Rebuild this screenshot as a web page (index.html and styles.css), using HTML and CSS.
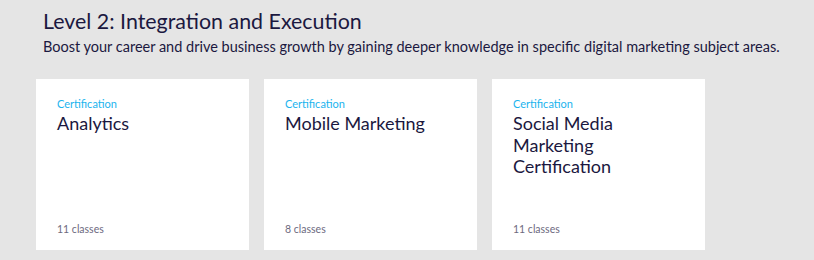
FILE: index.html
```html
<!DOCTYPE html>
<html>
<head>
<meta charset="utf-8">
<link rel="stylesheet" href="styles.css">
</head>
<body>
<section class="level">
  <h2 class="level-title">Level 2: Integration and Execution</h2>
  <p class="level-desc">Boost your career and drive business growth by gaining deeper knowledge in specific digital marketing subject areas.</p>
  <div class="cards">
    <div class="card">
      <div class="card-top">
        <div class="card-kind">Certification</div>
        <div class="card-name">Analytics</div>
      </div>
      <div class="card-count">11 classes</div>
    </div>
    <div class="card">
      <div class="card-top">
        <div class="card-kind">Certification</div>
        <div class="card-name">Mobile Marketing</div>
      </div>
      <div class="card-count">8 classes</div>
    </div>
    <div class="card">
      <div class="card-top">
        <div class="card-kind">Certification</div>
        <div class="card-name">Social Media Marketing Certification</div>
      </div>
      <div class="card-count">11 classes</div>
    </div>
  </div>
</section>
</body>
</html>
```

FILE: styles.css
```css
html, body {
  margin: 0;
  padding: 0;
  background: #e5e5e5;
}
body {
  font-family: "Lato", "Open Sans", sans-serif;
  color: #1b1840;
}
.level {
  padding: 8px 0 0 36px;
}
.level-title {
  margin: 0 0 0 7px;
  font-size: 21.4px;
  font-weight: 400;
  line-height: 27px;
}
.level-desc {
  margin: 3px 0 0 7px;
  font-size: 14.5px;
  line-height: 18px;
}
.cards {
  display: flex;
  gap: 15px;
  margin-top: 23px;
}
.card {
  width: 213px;
  height: 171px;
  background: #fff;
  box-sizing: border-box;
  padding: 18px 21px 14px;
  display: flex;
  flex-direction: column;
  justify-content: space-between;
}
.card-kind {
  font-size: 11px;
  color: #1ab4ee;
  line-height: 14px;
}
.card-name {
  font-size: 18px;
  line-height: 21.5px;
  margin-top: 2px;
  width: 150px;
}
.card-count {
  font-size: 10.5px;
  color: #6d6a80;
  line-height: 14px;
}
```
